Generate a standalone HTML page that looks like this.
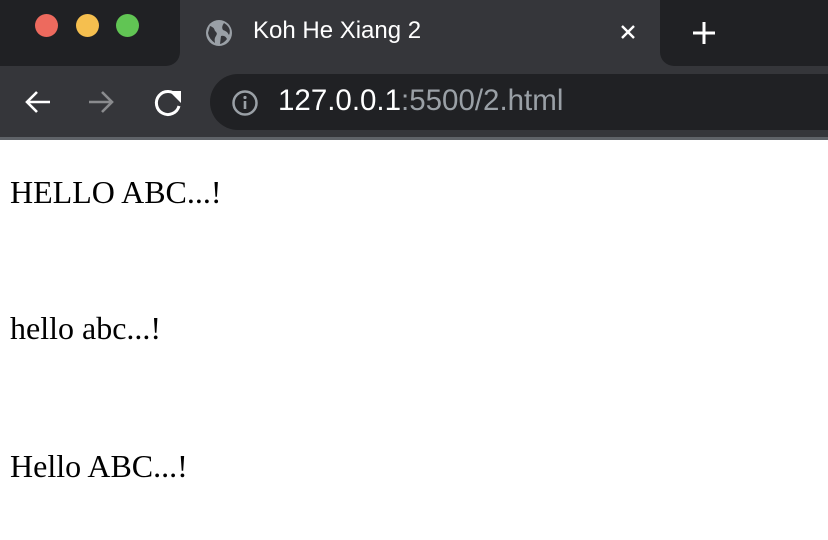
<!DOCTYPE html>
<html><head><meta charset="utf-8"><style>
body{margin:0;width:828px;height:540px;overflow:hidden;background:#fff;position:relative;font-family:"Liberation Sans",sans-serif}
.top{position:absolute;left:0;top:0;width:828px;height:66px;background:#202124}
.tab{position:absolute;left:180px;top:0;width:480px;height:66px;background:#35363a}
.tb{position:absolute;left:0;top:66px;width:828px;height:71px;background:#35363a}
.line{position:absolute;left:0;top:137px;width:828px;height:3px;background:#5f6368}
.omni{position:absolute;left:210px;top:74px;width:660px;height:56px;background:#202124;border-radius:28px}
.dot{position:absolute;top:14px;width:23px;height:23px;border-radius:50%}
.p{position:absolute;left:10px;font-family:"Liberation Serif",serif;font-size:32px;color:#000;margin:0;line-height:1}
</style></head><body>
<div class="top"></div>
<div class="tab"></div>
<svg style="position:absolute;left:166px;top:52px" width="14" height="14"><path d="M0 14 A14 14 0 0 0 14 0 V14Z" fill="#35363a"/></svg>
<svg style="position:absolute;left:660px;top:52px" width="14" height="14"><path d="M14 14 A14 14 0 0 1 0 0 V14Z" fill="#35363a"/></svg>
<div class="dot" style="left:35px;background:#ed6a5e"></div>
<div class="dot" style="left:76px;background:#f5bf4f"></div>
<div class="dot" style="left:116px;background:#61c554"></div>
<svg style="position:absolute;left:205px;top:19px" width="28" height="28" viewBox="0 0 28 28"><circle cx="14" cy="14" r="13" fill="#9aa0a6"/><path d="M5 7 Q9 8 10 12 Q13 14 11 17 Q9 19 10 24 Q4 20 3 14Z M19 4 Q16 8 18 11 Q22 12 24 16 Q27 9 19 4Z M16 17 Q20 16 22 20 Q19 24 15 25Z" fill="#35363a"/></svg>
<div style="position:absolute;left:253px;top:17px;color:#fff;font-size:24px">Koh He Xiang 2</div>
<svg style="position:absolute;left:619px;top:23px" width="18" height="18"><path d="M3 3L15 15M15 3L3 15" stroke="#fff" stroke-width="2.4"/></svg>
<svg style="position:absolute;left:691px;top:20px" width="26" height="26"><path d="M13 2V24M2 13H24" stroke="#fff" stroke-width="3"/></svg>
<div class="tb"></div>
<div class="line"></div>
<div class="omni"></div>
<svg style="position:absolute;left:22px;top:88px" width="32" height="28"><path d="M28 14H5M15 4L5 14L15 24" stroke="#fff" stroke-width="2.6" fill="none"/></svg>
<svg style="position:absolute;left:86px;top:88px" width="32" height="28"><path d="M3 14H26M16 4L26 14L16 24" stroke="#8a8b8e" stroke-width="2.6" fill="none"/></svg>
<svg style="position:absolute;left:150px;top:85px" width="36" height="34"><path d="M27 11A11.5 11.5 0 1 0 29 21" stroke="#fff" stroke-width="3" fill="none"/><path d="M19 6H31V18Z" fill="#fff"/></svg>
<svg style="position:absolute;left:231px;top:89px" width="28" height="28"><circle cx="14" cy="14" r="11.5" stroke="#9aa0a6" stroke-width="2.5" fill="none"/><rect x="12.7" y="12" width="2.6" height="8" fill="#9aa0a6"/><circle cx="14" cy="8.5" r="1.6" fill="#9aa0a6"/></svg>
<div style="position:absolute;left:278px;top:84px;font-size:29.5px;color:#fff">127.0.0.1<span style="color:#9aa0a6">:5500/2.html</span></div>
<p class="p" style="top:176px">HELLO ABC...!</p>
<p class="p" style="top:312px">hello abc...!</p>
<p class="p" style="top:450px">Hello ABC...!</p>
</body></html>
